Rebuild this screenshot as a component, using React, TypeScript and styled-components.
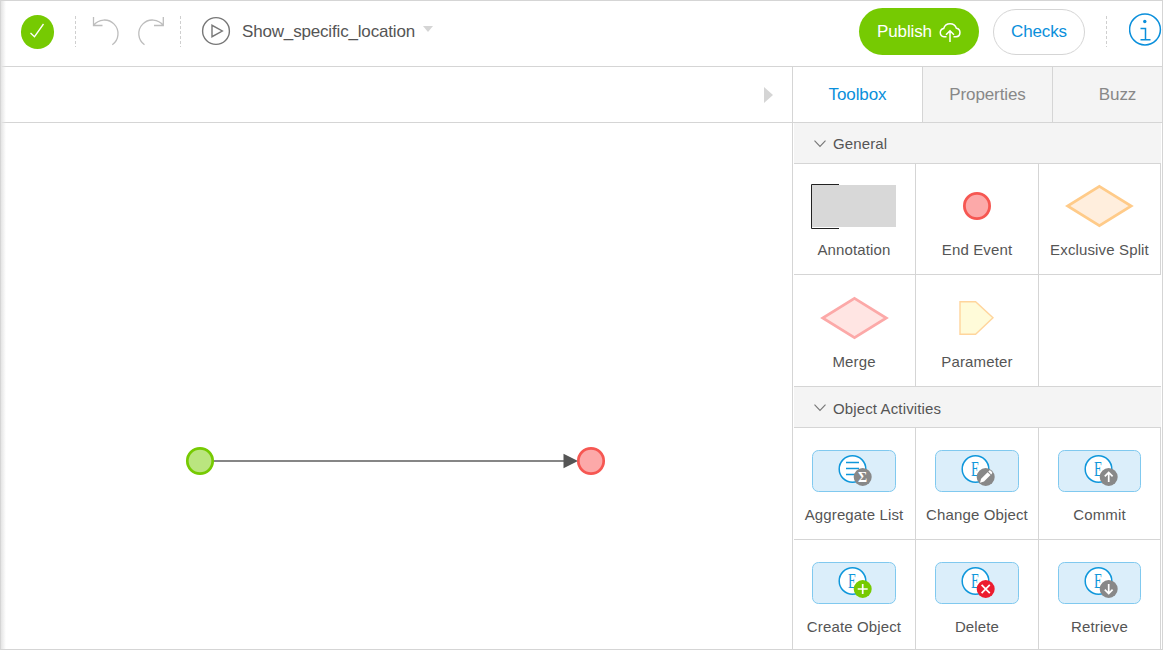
import React from "react";
import styled, { createGlobalStyle } from "styled-components";

const LINE = "#d5d5d5";
const BLUE = "#0a8fdb";
const GREEN = "#76ca02";

const GlobalStyle = createGlobalStyle`
  *, *::before, *::after { box-sizing: border-box; }
  body { margin: 0; background: #fff; }
`;

const Frame = styled.div`
  position: relative;
  display: flex;
  flex-direction: column;
  width: 1163px;
  height: 650px;
  overflow: hidden;
  border: 1px solid ${LINE};
  background: #fff;
  color: #555;
  font-family: "Liberation Sans", Arial, sans-serif;
  svg { display: block; flex: none; }
`;

const EdgeShadow = styled.div`
  position: absolute;
  inset: 0 auto 0 0;
  width: 5px;
  background: linear-gradient(to right, #e4e4e4, rgba(255, 255, 255, 0));
`;

const TopBar = styled.header`
  display: flex;
  flex: none;
  align-items: flex-start;
  height: 66px;
  padding-left: 20px;
  border-bottom: 1px solid ${LINE};
`;

const Status = styled.div`
  width: 33px;
  height: 34px;
  margin-top: 14px;
  border-radius: 16.5px;
  background: ${GREEN};
`;

const Separator = styled.div<{ $left: number }>`
  flex: none;
  width: 1px;
  height: 31px;
  margin: 15px 0 0 ${(p) => p.$left}px;
  background: repeating-linear-gradient(to bottom, #cfcfcf 0 3px, transparent 3px 5px);
`;

const ToolIcon = styled.div<{ $left: number }>`
  margin: 14px 0 0 ${(p) => p.$left}px;
`;

const Title = styled.div`
  width: 181px;
  margin: 21px 0 0 10px;
  font-size: 17px;
  line-height: 20px;
  letter-spacing: -0.17px;
  white-space: nowrap;
`;

const Caret = styled.div`
  width: 0;
  height: 0;
  margin-top: 25px;
  border: 5.5px solid transparent;
  border-top: 6px solid #d5d5d5;
  border-bottom: 0;
`;

const Actions = styled.div`
  display: flex;
  align-items: flex-start;
  margin-left: auto;
`;

const Button = styled.button<{ $primary?: boolean }>`
  display: flex;
  align-items: center;
  justify-content: center;
  gap: 7px;
  width: ${(p) => (p.$primary ? 120 : 92)}px;
  height: ${(p) => (p.$primary ? 47 : 46)}px;
  margin: ${(p) => (p.$primary ? "7px 14px 0 0" : "8px 0 0")};
  padding: 0;
  border: ${(p) => (p.$primary ? "0" : `1px solid ${LINE}`)};
  border-radius: 24px;
  background: ${(p) => (p.$primary ? GREEN : "#fff")};
  color: ${(p) => (p.$primary ? "#fff" : BLUE)};
  font: 17px/20px "Liberation Sans", Arial, sans-serif;
  letter-spacing: -0.12px;
`;

const Info = styled.div`
  margin: 12px 0 0 22px;
`;

const Body = styled.div`
  display: flex;
  flex: 1;
  min-height: 0;
`;

const Main = styled.main`
  display: flex;
  flex: none;
  flex-direction: column;
  width: 791px;
`;

const SubBar = styled.div`
  display: flex;
  flex: none;
  align-items: center;
  justify-content: flex-end;
  height: 56px;
  padding-right: 19px;
  border-bottom: 1px solid ${LINE};
`;

const ExpandCaret = styled.div`
  width: 0;
  height: 0;
  margin-top: 1px;
  border: 8px solid transparent;
  border-left: 9px solid #d5d5d5;
  border-right: 0;
`;

const Canvas = styled.div`
  flex: 1;
  padding: 317px 0 0 179px;
`;

const Sidebar = styled.aside`
  display: flex;
  flex: 1;
  flex-direction: column;
  min-width: 0;
  border-left: 1px solid ${LINE};
`;

const Tabs = styled.nav`
  display: flex;
  flex: none;
  height: 56px;
  overflow: hidden;
  border-bottom: 1px solid ${LINE};
`;

const Tab = styled.div<{ $active?: boolean }>`
  display: flex;
  flex: none;
  align-items: center;
  justify-content: center;
  width: 130px;
  border-right: 1px solid ${LINE};
  background: ${(p) => (p.$active ? "#fff" : "#f4f4f4")};
  color: ${(p) => (p.$active ? BLUE : "#888")};
  font-size: 17px;
  letter-spacing: -0.12px;
`;

const SectionHeader = styled.h2`
  display: flex;
  align-items: center;
  gap: 7px;
  height: 41px;
  margin: 0;
  padding: 1px 0 0 20px;
  border-bottom: 1px solid ${LINE};
  background: #f4f4f4;
  font-size: 15px;
  font-weight: 400;
  letter-spacing: 0.13px;
`;

const Section = styled.section`
  width: 367px;
  margin-left: 1px;
  & + & ${SectionHeader} { padding-top: 2px; }
`;

const Grid = styled.div<{ $first: number }>`
  display: grid;
  grid-template-columns: 122px 123px 122px;
  grid-template-rows: ${(p) => p.$first}px 112px;
`;

const Cell = styled.div<{ $empty?: boolean; $top?: number }>`
  display: flex;
  flex-direction: column;
  align-items: center;
  padding-top: ${(p) => p.$top ?? 21}px;
  border-right: ${(p) => (p.$empty ? "0" : `1px solid ${LINE}`)};
  border-bottom: 1px solid ${LINE};
  &:nth-child(3n + 1) { padding-right: 1px; }
`;

const Label = styled.span`
  margin-top: 12px;
  font-size: 15px;
  line-height: 18px;
  letter-spacing: 0.14px;
  white-space: nowrap;
`;

const Shape = ({ kind }: { kind: string }) => (
  <svg width="90" height="45" viewBox="0 0 90 45">
    {kind === "annotation" && (
      <>
        <rect x="3" y="1" width="84" height="42" fill="#d8d8d8" />
        <path d="M30 .5H2.5V44.5H30" fill="none" stroke="#222" />
      </>
    )}
    {kind === "end" && <circle cx="45" cy="22" r="12.6" fill="#fca9a9" stroke="#f65752" strokeWidth="2.8" />}
    {kind === "split" && (
      <path d="M44.4 2.4 76.2 22 44.4 41.6 12.6 22Z" fill="#ffeedd" stroke="#ffcb89" strokeWidth="2.7" />
    )}
    {kind === "merge" && (
      <path d="M45.5 2.4 77.3 22 45.5 41.6 13.7 22Z" fill="#ffe5e3" stroke="#fca9a8" strokeWidth="2.7" />
    )}
    {kind === "parameter" && (
      <path d="M28 5.8H43.6L61 21.8 43.6 38.3H28Z" fill="#fffbd9" stroke="#ffd59c" strokeWidth="1.4" />
    )}
  </svg>
);

const badges: Record<string, React.ReactNode> = {
  sum: (
    <text x="50.7" y="31.5" textAnchor="middle" fontSize="14" fontWeight="700" fontFamily="Liberation Serif, serif" fill="#fff">
      Σ
    </text>
  ),
  edit: (
    <>
      <path d="M45 32.7 46.1 28.7 52.6 22.2 55.5 25.1 49 31.6Z" fill="#fff" />
      <path d="M53.3 21.5 54.3 20.6Q55 20 55.7 20.7L57 22Q57.6 22.7 57 23.4L56.2 24.4Z" fill="#fff" />
    </>
  ),
  up: <path d="M50.7 32V22.7M46.8 26.4 50.7 22.5 54.6 26.4" />,
  add: <path d="M50.7 22V32M45.7 27H55.7" />,
  remove: <path d="M46.6 22.9 54.8 31.1M54.8 22.9 46.6 31.1" />,
  down: <path d="M50.7 22V31.3M46.8 27.6 50.7 31.5 54.6 27.6" />,
};

const Activity = ({ badge, width = 84 }: { badge: string; width?: number }) => {
  const fill = badge === "add" ? GREEN : badge === "remove" ? "#ec1c2e" : "#888";
  return (
    <svg width={width} height="45" viewBox={`0 -1 ${width} 45`}>
      <rect x=".5" y=".5" width={width - 1} height="41" rx="6" fill="#dbeefa" stroke="#80c9ef" />
      <circle cx="40.5" cy="19" r="13.3" fill="#fff" stroke="#0f97db" strokeWidth="1.5" />
      {badge === "sum" ? (
        <path d="M34 12.5H47M34 18.5H47M34 24.5H47" stroke="#0f97db" strokeWidth="1.4" />
      ) : (
        <text
          transform="translate(36 25.5) scale(.69 1)"
          fontSize="20"
          fontFamily="Liberation Serif, serif"
          fill="#0f97db"
        >
          E
        </text>
      )}
      <circle cx="50.7" cy="27" r="9" fill={fill} />
      <g fill="none" stroke={badge === "sum" || badge === "edit" ? "none" : "#fff"} strokeWidth="1.7">
        {badges[badge]}
      </g>
    </svg>
  );
};

const Chevron = () => (
  <svg width="12" height="8" viewBox="0 0 12 8">
    <path d="M.5 .7 6 6.5 11.5 .7" fill="none" stroke="#777" strokeWidth="1.1" />
  </svg>
);

const general = [
  ["annotation", "Annotation"],
  ["end", "End Event"],
  ["split", "Exclusive Split"],
  ["merge", "Merge"],
  ["parameter", "Parameter"],
];

const activities = [
  ["sum", "Aggregate List"],
  ["edit", "Change Object"],
  ["up", "Commit"],
  ["add", "Create Object"],
  ["remove", "Delete"],
  ["down", "Retrieve"],
];

export default function App() {
  return (
    <Frame>
      <GlobalStyle />
      <TopBar>
        <Status>
          <svg width="33" height="34" viewBox="0 0 33 34">
            <path d="M9.5 18 13.5 21.7 22.5 9" fill="none" stroke="#fff" strokeWidth="1.3" />
          </svg>
        </Status>
        <Separator $left={21} />
        <ToolIcon $left={16}>
          <svg width="28" height="32" viewBox="0 0 28 32" fill="none" stroke="#bdbdbd" strokeWidth="1.3">
            <path d="M1.5 2V10.5H10.5M1.5 10.5A13.6 13.6 0 1 1 20.3 29.7" />
          </svg>
        </ToolIcon>
        <ToolIcon $left={17}>
          <svg width="28" height="32" viewBox="0 0 28 32" fill="none" stroke="#bdbdbd" strokeWidth="1.3">
            <path d="M26.3 2V10.5H17M26.3 10.5A13.6 13.6 0 1 0 7.5 29.7" />
          </svg>
        </ToolIcon>
        <Separator $left={15} />
        <ToolIcon $left={20}>
          <svg width="31" height="32" viewBox="0 0 31 32" fill="none" stroke="#777" strokeWidth="1.4">
            <circle cx="15" cy="16" r="13.4" />
            <path d="M11 10.3V21.7L21.3 16Z" />
          </svg>
        </ToolIcon>
        <Title>Show_specific_location</Title>
        <Caret />
        <Actions>
          <Button $primary>
            Publish
            <svg width="22" height="22" viewBox="0 0 22 22" fill="none" stroke="#fff" strokeWidth="1.5">
              <path d="M7.5 15.8H5A4.2 4.2 0 0 1 4.7 7.5 6.7 6.7 0 0 1 17.4 7.3 4.3 4.3 0 0 1 17.2 15.8H14.5M11 21V10M7 13.8 11 9.7 15 13.8" />
            </svg>
          </Button>
          <Button>Checks</Button>
          <Separator $left={21} />
          <Info>
            <svg width="33" height="33" viewBox="0 0 33 33" fill="none" stroke={BLUE} strokeWidth="1.5">
              <circle cx="16" cy="16.5" r="15.4" />
              <path d="M11.5 15.5H16.5V26.8M11.5 26.8H21.5" />
              <circle cx="15.8" cy="8.5" r="1.7" fill={BLUE} stroke="none" />
            </svg>
          </Info>
        </Actions>
      </TopBar>
      <Body>
        <Main>
          <SubBar>
            <ExpandCaret />
          </SubBar>
          <Canvas>
            <svg width="430" height="40" viewBox="0 0 430 40">
              <path d="M33 21H386" stroke="#868686" strokeWidth="2" />
              <path d="M383.5 13.8 398 21 383.5 28.2Z" fill="#555" />
              <circle cx="20" cy="21" r="12.7" fill="#bae57f" stroke="#76ca02" strokeWidth="2.7" />
              <circle cx="411" cy="21" r="12.7" fill="#fca9a9" stroke="#f65752" strokeWidth="2.7" />
            </svg>
          </Canvas>
        </Main>
        <Sidebar>
          <Tabs>
            <Tab $active>Toolbox</Tab>
            <Tab>Properties</Tab>
            <Tab>Buzz</Tab>
          </Tabs>
          <Section>
            <SectionHeader>
              <Chevron />
              General
            </SectionHeader>
            <Grid $first={111}>
              {general.map(([kind, label], i) => (
                <Cell key={kind} $top={i < 3 ? 20 : 21}>
                  <Shape kind={kind} />
                  <Label>{label}</Label>
                </Cell>
              ))}
              <Cell $empty />
            </Grid>
          </Section>
          <Section>
            <SectionHeader>
              <Chevron />
              Object Activities
            </SectionHeader>
            <Grid $first={112}>
              {activities.map(([badge, label], i) => (
                <Cell key={badge}>
                  <Activity badge={badge} width={i % 3 === 2 ? 83 : 84} />
                  <Label>{label}</Label>
                </Cell>
              ))}
            </Grid>
          </Section>
        </Sidebar>
      </Body>
      <EdgeShadow />
    </Frame>
  );
}
